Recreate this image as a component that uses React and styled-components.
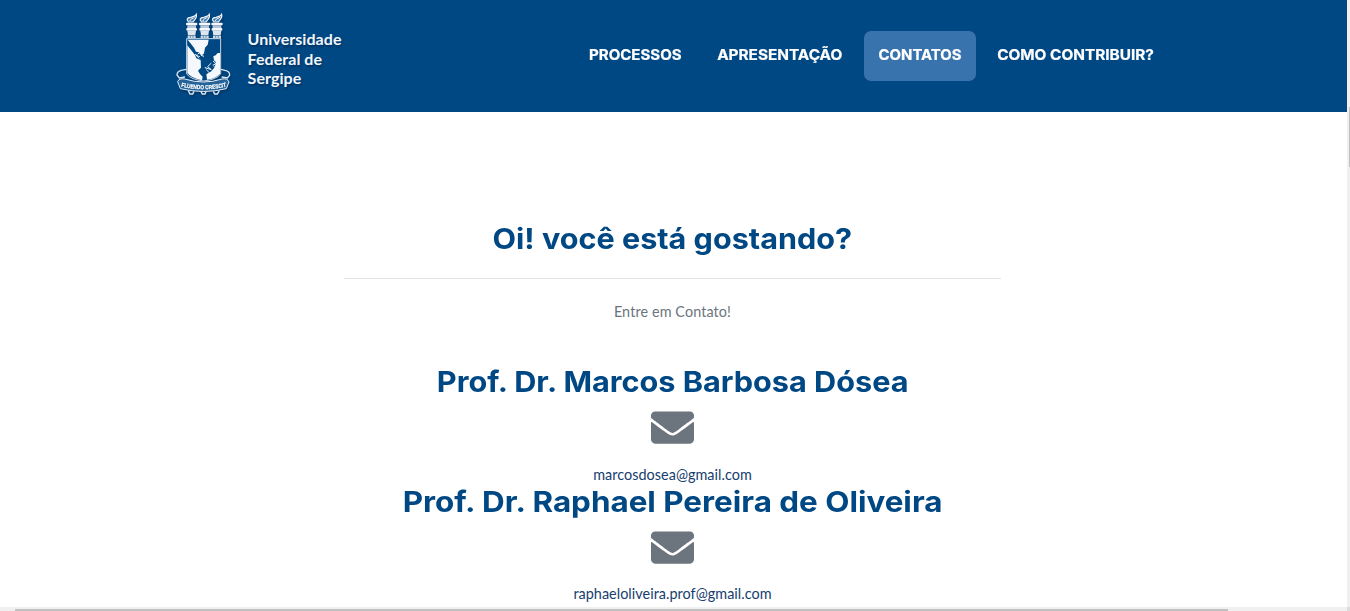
import React from "react";
import styled, { createGlobalStyle } from "styled-components";
import { FaEnvelope } from "react-icons/fa";

const GlobalStyle = createGlobalStyle`
  * { box-sizing: border-box; }
  body { margin: 0; background: #fff; font-family: Lato, sans-serif; overflow: hidden; }
`;

const Window = styled.div`
  display: grid;
  grid-template: 607px 4px / 1347px 3px;
  width: 1350px;
  height: 611px;
  overflow: hidden;
`;

const Page = styled.div`
  overflow: hidden;
`;

const Header = styled.header`
  display: flex;
  align-items: flex-start;
  height: 112px;
  padding: 0 178px 0 165px;
  background: #004884;
`;

const Brand = styled.a`
  display: flex;
  width: 399px;
  padding-top: 5px;
`;

const Crest = styled.svg`
  width: 80px;
  height: 100px;
  flex: none;
  filter: drop-shadow(1px 2px 1px rgba(0, 20, 50, 0.35));
`;

const BrandName = styled.span`
  margin: 24px 0 0 2.6px;
  color: #f1f6fb;
  font: 700 16px/19.5px Lato, sans-serif;
  letter-spacing: 0.05px;
  text-shadow: 1px 2px 2px rgba(0, 20, 50, 0.4);
`;

const Nav = styled.nav`
  display: flex;
  gap: 7px;
  padding-top: 31px;
  margin-left: 10px;
`;

const NavLink = styled.a`
  display: flex;
  align-items: center;
  justify-content: center;
  flex: none;
  width: ${(p) => p.$width}px;
  height: 50px;
  padding-bottom: 2px;
  border-radius: 7px;
  background: ${(p) => (p.$active ? "#3973ad" : "transparent")};
  color: #fff;
  font: 700 14.4px/20px Inter, sans-serif;
  -webkit-text-stroke: 0.2px #fff;
  white-space: nowrap;
`;

const Wide = styled.span`
  display: inline-block;
  transform: scaleX(${(p) => p.$stretch});
`;

const Contact = styled.main`
  display: flex;
  flex-direction: column;
  align-items: center;
  padding: 109px 2px 0 0;
`;

const Title = styled.h2`
  margin: 0;
  height: 36px;
  color: #004884;
  font: 700 28.8px/36px Inter, sans-serif;
  white-space: nowrap;
`;

const Divider = styled.hr`
  width: 657px;
  height: 1px;
  margin: 21px 0 22px;
  border: 0;
  background: #e3e4e5;
`;

const Lead = styled.p`
  margin: 0 0 41px;
  color: #6c757d;
  font-size: 14.4px;
  line-height: 22px;
  letter-spacing: 0.1px;
`;

const Person = styled.section`
  display: flex;
  flex-direction: column;
  align-items: center;
  height: 120px;
  color: #6c757d;

  svg { margin-top: 6px; flex: none; }
`;

const Email = styled.a`
  margin-top: ${(p) => p.$gap}px;
  color: #17406f;
  font-size: 14.4px;
  line-height: 22px;
  letter-spacing: 0.04px;
`;

const VerticalBar = styled.div`
  padding: 107px 0 0 2px;
  background: #f0f0f0;
  &::before { content: ""; display: block; height: 60px; background: #c1c1c1; }
`;

const HorizontalBar = styled.div`
  padding: 2px 119px 0 15px;
  background: #f0f0f0;
  &::before { content: ""; display: block; height: 2px; background: #c1c1c1; }
`;

const Corner = styled.div`
  background: #dcdcdc;
`;

function Torch({ x }) {
  return (
    <g transform={`translate(${x} 0)`}>
      <path d="M-9 51C-18 43-13 38-3 37C6 35 12 33 14 28C17 38 10 44 4 51Z" fill="#4b7fae" stroke="#eef4fa" strokeWidth="3.5" />
      <path d="M-5 48C-5 41 5 41 9 36" fill="none" stroke="#eef4fa" strokeWidth="3" />
      <rect x="-17" y="53" width="34" height="8" rx="3" />
      <rect x="-13" y="61" width="26" height="8" opacity=".75" />
      <rect x="-16" y="69" width="32" height="8" rx="3" />
      <path d="M-13 77H13L11 91H-11Z" opacity=".9" />
      <path d="M-12 92H12V100H-12Z" opacity=".85" />
      <path d="M-4 92V99M4 92V99" stroke="#004884" strokeWidth="1.5" />
    </g>
  );
}

function Logo() {
  return (
    <Crest viewBox="0 0 240 300" fill="#f5f8fc" aria-hidden="true">
      <Torch x={80} />
      <Torch x={119} />
      <Torch x={156} />
      <path d="M65 101H167V207Q154 224 116 228Q78 224 65 207Z" fill="#004884" stroke="#cbdbe9" strokeWidth="3" />
      <path d="M68 104H131L128 119L120 128L117 145L108 151L101 142L93 140L87 128Z" />
      <path d="M67 121L90 150L94 160L107 165L108 188L99 197L105 207L113 215L111 226Q79 220 67 204Z" />
      <path d="M165 144L158 144L152 151L145 154L147 166L153 172L149 187L139 199L124 208L126 224Q151 221 165 207Z" />
      <path d="M110 136L116 145L108 151L117 154M104 143L94 151L105 155M90 147L102 160M144 168L153 176L143 181L151 188M139 174L128 185L139 194L120 188L132 203" fill="none" stroke="#f1f6fb" strokeWidth="3" />
      <path d="M91 142L103 154M120 190L134 199M137 178L148 185" stroke="#004884" strokeWidth="2" />
      <path d="M64 193L48 196Q36 200 36 210L43 219L60 216M168 193L180 196Q195 199 194 211L187 219L170 216" fill="none" stroke="#d9e6f1" strokeWidth="4" />
      <path d="M38 230Q42 219 59 222Q116 240 171 222Q188 219 192 231L184 251Q116 268 46 251Z" fill="#23639a" stroke="#e7eff7" strokeWidth="3" />
      <path id="motto" d="M48 245Q116 261 184 245" fill="none" />
      <text fontFamily="Liberation Sans, sans-serif" fontWeight="700" fontSize="18" fill="#fff" stroke="#fff" strokeWidth="0.6">
        <textPath href="#motto" textLength="137" lengthAdjust="spacingAndGlyphs">FLUENDO CRESCIT</textPath>
      </text>
      <path d="M70 257L75 267L83 267L87 259M108 260L112 267H120L123 260M145 259L149 267H157L163 257" fill="none" stroke="#dce8f2" strokeWidth="4" />
    </Crest>
  );
}

const links = [
  { label: "PROCESSOS", width: 122, stretch: 1.045 },
  { label: "APRESENTAÇÃO", width: 154, stretch: 1.066 },
  { label: "CONTATOS", width: 112, stretch: 1.035, active: true },
  { label: "COMO CONTRIBUIR?", width: 185, stretch: 1.066 },
];

const people = [
  { name: "Prof. Dr. Marcos Barbosa Dósea", email: "marcosdosea@gmail.com", stretch: 1.064, gap: 15 },
  { name: "Prof. Dr. Raphael Pereira de Oliveira", email: "raphaeloliveira.prof@gmail.com", stretch: 1.09, gap: 14 },
];

export default function App() {
  return (
    <Window>
      <GlobalStyle />
      <Page>
        <Header>
          <Brand>
            <Logo />
            <BrandName>
              Universidade
              <br />
              Federal de
              <br />
              Sergipe
            </BrandName>
          </Brand>
          <Nav>
            {links.map((l) => (
              <NavLink key={l.label} $width={l.width} $active={l.active}>
                <Wide $stretch={l.stretch}>{l.label}</Wide>
              </NavLink>
            ))}
          </Nav>
        </Header>
        <Contact>
          <Title><Wide $stretch={1.062}>Oi! você está gostando?</Wide></Title>
          <Divider />
          <Lead>Entre em Contato!</Lead>
          {people.map((p) => (
            <Person key={p.email}>
              <Title><Wide $stretch={p.stretch}>{p.name}</Wide></Title>
              <FaEnvelope size={43} />
              <Email $gap={p.gap}>{p.email}</Email>
            </Person>
          ))}
        </Contact>
      </Page>
      <VerticalBar />
      <HorizontalBar />
      <Corner />
    </Window>
  );
}
